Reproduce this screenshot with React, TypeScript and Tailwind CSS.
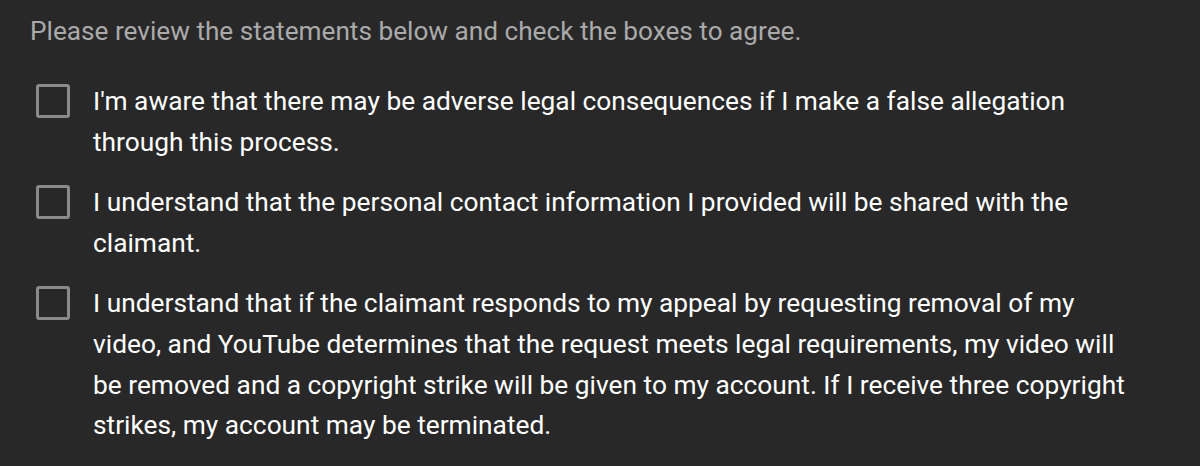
const statements = [
  "I'm aware that there may be adverse legal consequences if I make a false allegation through this process.",
  'I understand that the personal contact information I provided will be shared with the claimant.',
  'I understand that if the claimant responds to my appeal by requesting removal of my video, and YouTube determines that the request meets legal requirements, my video will be removed and a copyright strike will be given to my account. If I receive three copyright strikes, my account may be terminated.',
];

export default function App() {
  return (
    <div
      className="w-[1200px] h-[466px] bg-[#282828] pl-[30px] pr-[65px] pt-[11px] overflow-hidden"
      style={{ fontFamily: 'Roboto, "Liberation Sans", sans-serif' }}
    >
      <p className="text-[26.2px] leading-[40px] text-[#aaaaaa]">
        Please review the statements below and check the boxes to agree.
      </p>
      <div className="mt-[30px] flex flex-col gap-[20px]">
        {statements.map((s, i) => (
          <label key={i} className="flex items-start gap-[23px] pl-[6px]">
            <span className="mt-[3px] w-[34px] h-[34px] shrink-0 rounded-[3px] border-[3px] border-[#8a8a8a]" />
            <span className="text-[26.3px] leading-[40.6px] text-white">{s}</span>
          </label>
        ))}
      </div>
    </div>
  );
}
